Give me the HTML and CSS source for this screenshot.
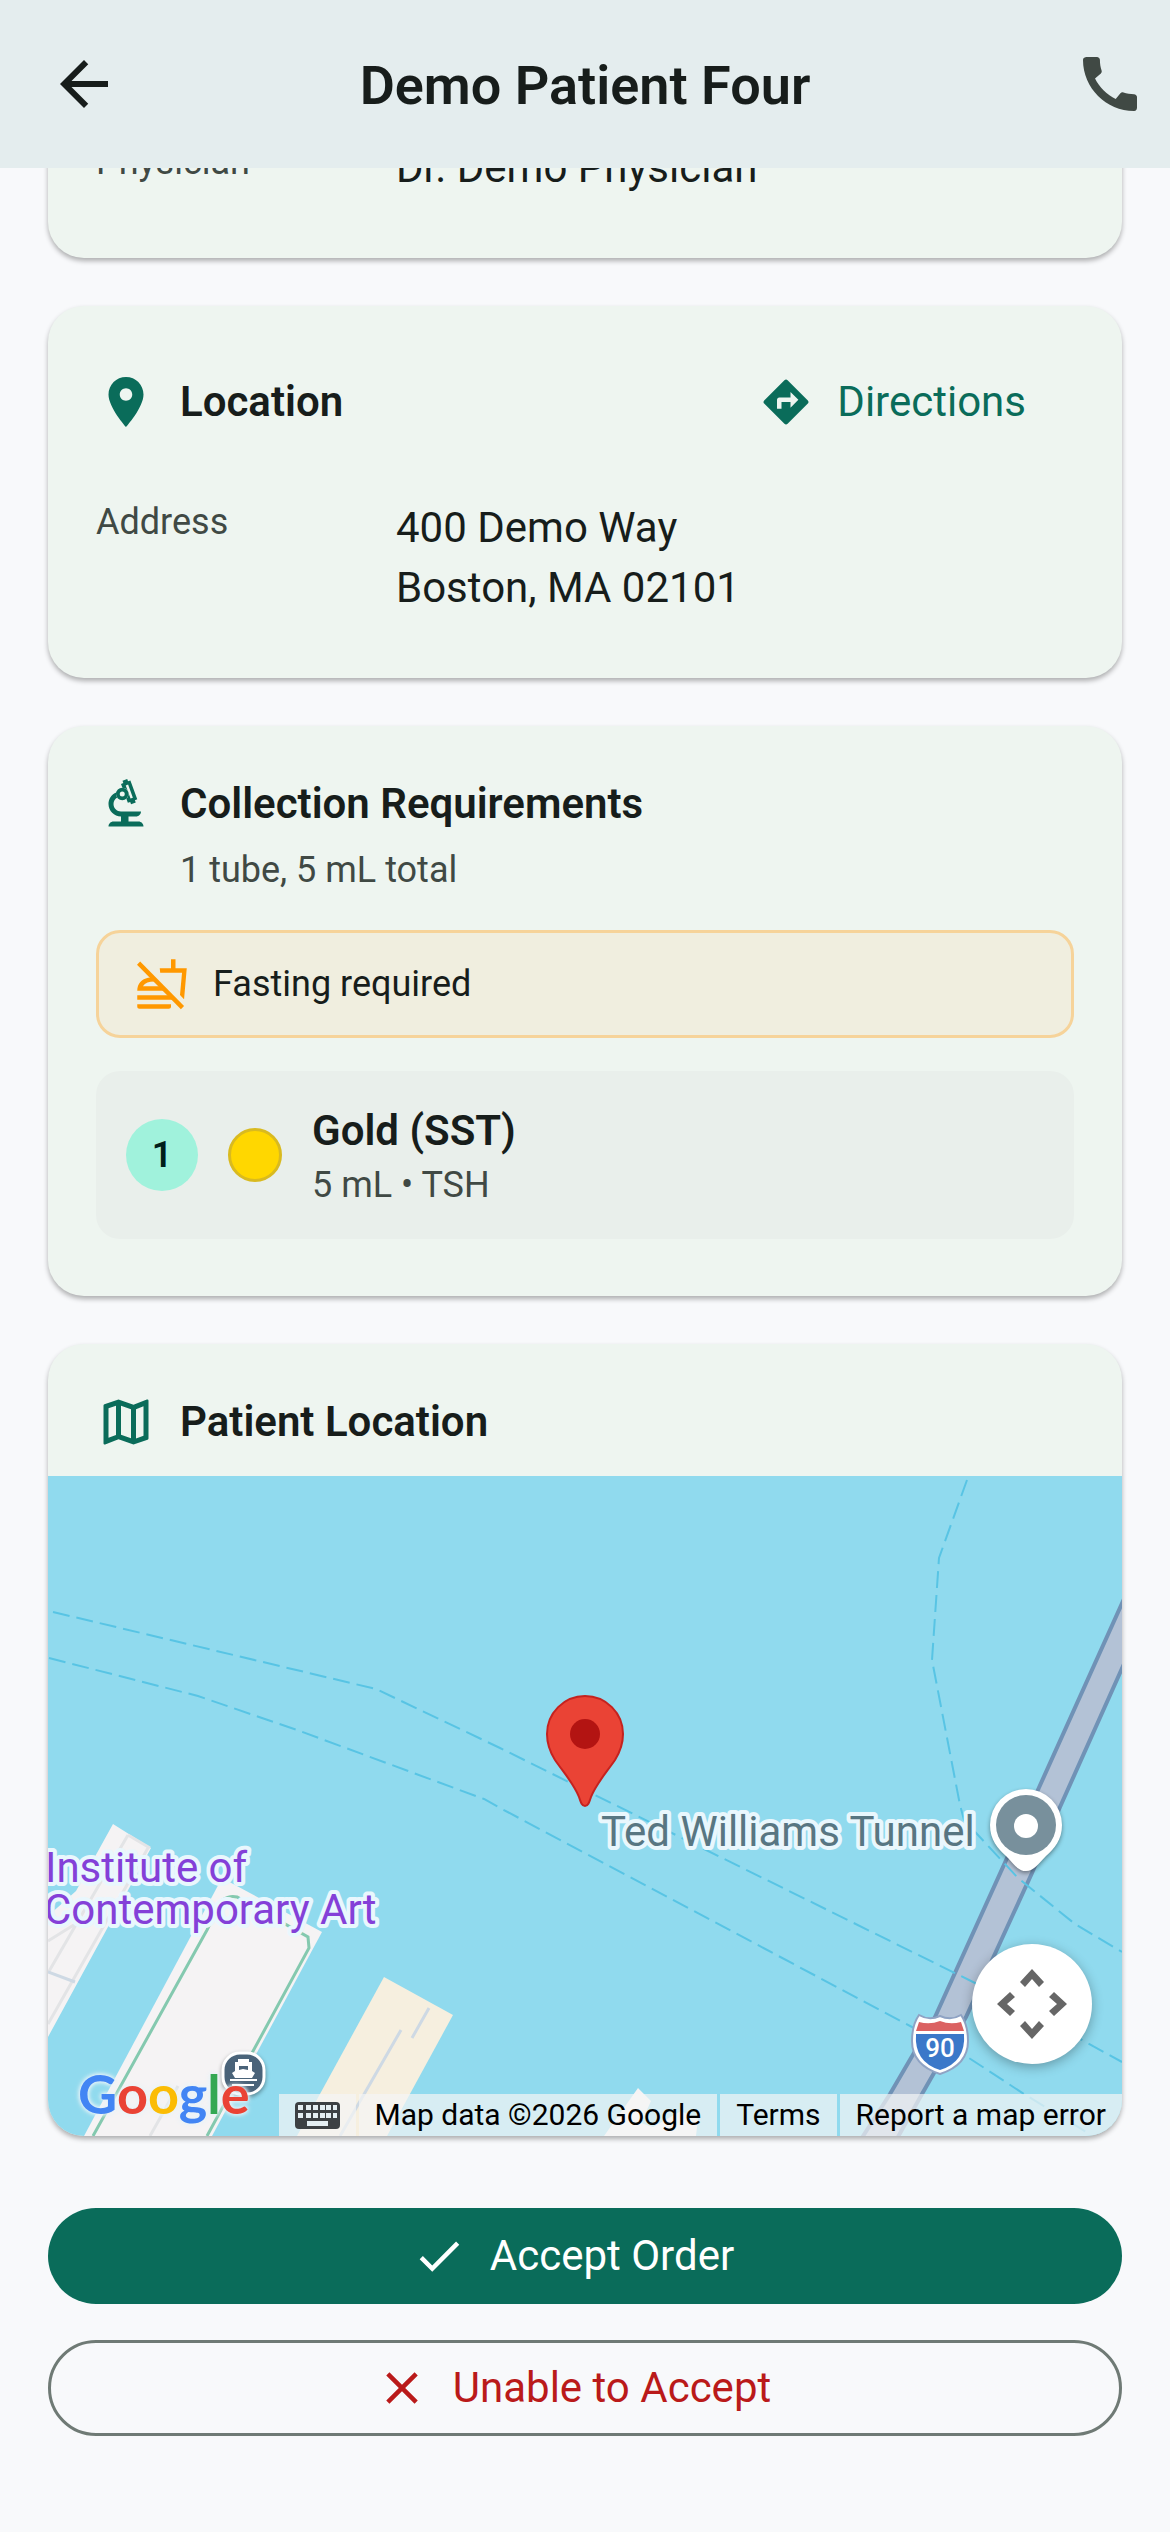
FILE: index.html
```
<!DOCTYPE html>
<html lang="en">
  <head>
    <meta charset="UTF-8" />
    <meta name="viewport" content="width=device-width, initial-scale=1.0" />
    <title>Demo Patient Four</title>
    <link rel="stylesheet" href="styles.css">
  </head>
  <body>
    <header class="app-bar">
      <button class="icon-button" aria-label="Back">
        <svg class="icon-lg" viewBox="0 0 24 24"><path d="M20 11H7.83l5.59-5.59L12 4l-8 8 8 8 1.41-1.41L7.83 13H20v-2z" /></svg>
      </button>
      <h1>Demo Patient Four</h1>
      <button class="icon-button call" aria-label="Call patient">
        <svg class="icon-lg" viewBox="0 0 24 24"><path d="M20.01 15.38c-1.23 0-2.42-.2-3.53-.56-.35-.12-.74-.03-1.01.24l-1.57 1.97c-2.83-1.35-5.48-3.9-6.89-6.83l1.95-1.66c.27-.28.35-.67.24-1.02-.37-1.11-.56-2.3-.56-3.53 0-.54-.45-.99-.99-.99H4.19C3.65 3 3 3.24 3 3.99 3 13.28 10.73 21 20.01 21c.71 0 .99-.63.99-1.18v-3.45c0-.54-.45-.99-.99-.99z" /></svg>
      </button>
    </header>

    <main class="content">
      <section class="card card-scrolled">
        <dl class="info-row">
          <dt>Physician</dt>
          <dd>Dr. Demo Physician</dd>
        </dl>
      </section>

      <section class="card">
        <div class="card-header tall">
          <svg class="icon" viewBox="0 0 24 24"><path d="M12 2C8.13 2 5 5.13 5 9c0 5.25 7 13 7 13s7-7.75 7-13c0-3.87-3.13-7-7-7zm0 9.5c-1.38 0-2.5-1.12-2.5-2.5s1.12-2.5 2.5-2.5 2.5 1.12 2.5 2.5-1.12 2.5-2.5 2.5z" /></svg>
          <h2>Location</h2>
          <button class="text-button">
            <svg class="icon-sm" viewBox="0 0 24 24"><path d="M21.71 11.29l-9-9c-.39-.39-1.02-.39-1.41 0l-9 9c-.39.39-.39 1.02 0 1.41l9 9c.39.39 1.02.39 1.41 0l9-9c.39-.38.39-1.01 0-1.41zM14 14.5V12h-4v3H8v-4c0-.55.45-1 1-1h5V7.5l3.5 3.5-3.5 3.5z" /></svg>
            Directions
          </button>
        </div>
        <dl class="info-row">
          <dt>Address</dt>
          <dd>400 Demo Way<br />Boston, MA 02101</dd>
        </dl>
      </section>

      <section class="card">
        <div class="card-header">
          <svg class="icon" viewBox="0 0 24 24">
            <path d="M7 19c-1.1 0-2 .9-2 2h14c0-1.1-.9-2-2-2h-4v-2h3c1.1 0 2-.9 2-2h-8c-1.66 0-3-1.34-3-3 0-1.09.59-2.04 1.46-2.56C8.17 9.03 8 8.54 8 8c0-.21.04-.42.09-.62C6.28 8.13 5 9.92 5 12c0 2.76 2.24 5 5 5v2H7z" />
            <path fill-rule="evenodd" d="M10.56 5.51C11.91 5.54 13 6.64 13 8c0 .75-.33 1.41-.85 1.87l.59 1.62.94-.34.34.94 1.88-.68-.34-.94.94-.34L13.76 2.6l-.94.34L12.48 2 10.6 2.68l.34.94-.94.35.56 1.54zM11.9 4.55l.94-.34 1.91 5.24-.94.34z" />
            <path fill-rule="evenodd" d="M10.5 5.5a2.5 2.5 0 1 0 0 5 2.5 2.5 0 0 0 0-5zm0 1.5a1 1 0 1 1 0 2 1 1 0 0 1 0-2z" />
          </svg>
          <div class="card-title">
            <h2>Collection Requirements</h2>
            <p>1 tube, 5 mL total</p>
          </div>
        </div>
        <div class="notice">
          <svg class="icon-sm" viewBox="0 0 24 24">
            <path d="M.9 3.4L2.3 2l19.5 19.8-1.4 1.4z" />
            <path d="M16 1h2v4h5l-1.2 13.8-1.8-1.9L20.9 7h-9.700L11 5h5zM1 17h14.500l2 2H1zM1 21h15v1c0 .6-.4 1-1 1H2c-.6 0-1-.4-1-1z" />
            <path fill-rule="evenodd" d="M1 15c0-3.300 2.100-5.200 4.800-5.800L8 9l6 6zM3.500 13h7.200L8.500 10.900C6.300 10.900 4.500 11.500 3.500 13z" />
          </svg>
          Fasting required
        </div>
        <div class="tube">
          <span class="tube-count">1</span>
          <span class="tube-color"></span>
          <div>
            <h3>Gold (SST)</h3>
            <p>5 mL • TSH</p>
          </div>
        </div>
      </section>

      <section class="card map-card">
        <div class="card-header">
          <svg class="icon" viewBox="0 0 24 24"><path d="M20.5 3l-.16.03L15 5.1 9 3 3.36 4.9c-.21.07-.36.25-.36.48V20.5c0 .28.22.5.5.5l.16-.03L9 18.9l6 2.1 5.64-1.9c.21-.07.36-.25.36-.48V3.5c0-.28-.22-.5-.5-.5zM10 5.47l4 1.4v11.66l-4-1.4V5.47zm-5 .99l3-1.01v11.7l-3 1.16V6.46zm14 11.08l-3 1.01V6.86l3-1.16v11.84z" /></svg>
          <h2>Patient Location</h2>
        </div>
        <div class="map">
          <svg class="map-tiles" viewBox="0 0 1074 660" preserveAspectRatio="xMidYMid slice">
            <!-- piers -->
            <path class="land" d="M65 348l38 24L0 561V440l28-25z" />
            <path class="lane" d="M80 359L0 497M100 372L0 548M80 359l22 13M0 465l45-28" />
            <path class="street" d="M0 496l27 10" />
            <path class="land" d="M174 402l100 54-110 204H36z" />
            <path class="lane" d="M130 610l-28 50" />
            <path class="trail" d="M45 660l114-206 15-30q8-5 15-3l71 40 1 11-102 188" />
            <path class="sand" d="M336 501l69 38-66 121h-90z" />
            <path class="street" d="M381 532l-17 30M353 554l-61 106" />
            <path class="land" d="M590 612l13 13-10 22 12 4 28-16 17 8-2 17h-92z" />
            <!-- motorway -->
            <path class="road" d="M1080 114l-91 202-102 225-45 77-32 50h36l28-50 44-77 66-144 28-66 68-152z" />
            <!-- ferry routes -->
            <path class="ferry" d="M5 136l323 77 124 59 475 235 107 57 40 22" />
            <path class="ferry" d="M1 182l149 38 99 34 187 69 18 10 410 218 57 31 55 36 64 39" />
            <path class="ferry" d="M919 4l-28 78-7 102 28 145 4 15 54 58 57 46 47 28" />

            <text class="place museum" x="-3" y="406">Institute of</text>
            <text class="place museum" x="-4" y="448">Contemporary Art</text>
            <text class="place tunnel" x="553" y="370">Ted Williams Tunnel</text>

            <g class="poi">
              <path fill="#fff" d="M978 313a36 36 0 0 0-36 36c0 15 8 24 16 31 8 8 12 15 20 15s12-7 20-15c8-7 16-16 16-31a36 36 0 0 0-36-36z" />
              <circle cx="978" cy="349" r="30" fill="#78909c" />
              <circle cx="978" cy="350" r="12" fill="#fff" />
            </g>

            <g>
              <path fill="#fff" stroke="#8fa3c4" stroke-width="2" d="M871 539q10 6 21 1 11 5 21-1 7 10 7 26 0 24-28 33-28-9-28-33 0-16 7-26z" />
              <path fill="#db6262" d="M871 546q11 3 21-1 10 4 21 1l3 9h-48z" />
              <path fill="#3b78c9" d="M868 558h48q2 28-24 36-26-8-24-36z" />
              <text class="shield" x="892" y="581">90</text>
            </g>

            <g class="poi">
              <rect x="175" y="577" width="41" height="41" rx="17" fill="#4a6379" stroke="#fff" stroke-width="3" />
              <path fill="#fff" fill-rule="evenodd" d="M190 583h11v3h3v9l3 2-3 5h-17l-3-5 3-2v-9h3zM191 590v4l4-1 5 1v-4zM182 603h27v2h-27zM184 608h22v2h-22z" />
            </g>

            <path class="pin" d="M537 220a38 38 0 0 0-38 38c0 11 3 18 8 26 9 13 19 24 24 37 2 6 3 9 6 9s4-3 6-9c5-13 15-24 24-37 5-8 8-15 8-26a38 38 0 0 0-38-38z" />
            <circle cx="537" cy="258" r="15" fill="#b31412" />
          </svg>

          <a class="google" href="#"><span class="blue">G</span><span class="red">o</span><span class="yellow">o</span><span class="blue">g</span><span class="green">l</span><span class="red">e</span></a>

          <button class="camera" aria-label="Map camera controls">
            <svg viewBox="-60 -60 120 120"><path d="M0-35l12 13-5 5-7-8-7 8-5-5zM0 35l12-13-5-5-7 8-7-8-5 5zM-35 0l13-12 5 5-8 7 8 7-5 5zM35 0L22-12l-5 5 8 7-8 7 5 5z" /></svg>
          </button>

          <div class="map-footer">
            <button class="keyboard" aria-label="Keyboard shortcuts">
              <svg viewBox="0 0 45 27"><rect width="45" height="27" rx="4" fill="#3c4043" /><path fill="#e4eef2" d="M3 3h5v5H3zM11 3h5v5h-5zM18 3h5v5h-5zM25 3h5v5h-5zM31 3h5v5h-5zM38 3h4v5h-4zM3 11h5v5H3zM11 11h5v5h-5zM18 11h5v5h-5zM25 11h5v5h-5zM31 11h5v5h-5zM38 11h4v5h-4zM12 19h21v5H12z" /></svg>
            </button>
            <span>Map data ©2026 Google</span>
            <a href="#">Terms</a>
            <a href="#">Report a map error</a>
          </div>
        </div>
      </section>

      <div class="actions">
        <button class="btn btn-accept">
          <svg class="icon-sm" viewBox="0 0 24 24"><path d="M9 16.17L4.83 12l-1.42 1.41L9 19 21 7l-1.41-1.41z" /></svg>
          Accept Order
        </button>
        <button class="btn btn-decline">
          <svg class="icon-sm" viewBox="0 0 24 24"><path d="M19 6.41L17.59 5 12 10.59 6.41 5 5 6.41 10.59 12 5 17.59 6.41 19 12 13.41 17.59 19 19 17.59 13.41 12z" /></svg>
          Unable to Accept
        </button>
      </div>
    </main>
  </body>
</html>
```

FILE: styles.css
```
* {
  box-sizing: border-box;
}

body {
  margin: 0;
  min-height: 100vh;
  background-color: #f8f9fb;
  color: #171d1b;
  font-family: Roboto, sans-serif;
  font-size: 42px;
  line-height: 60px;
}

h1,
h2,
h3,
p,
dl,
dd {
  margin: 0;
}

button {
  border: none;
  background: none;
  padding: 0;
  color: inherit;
  font: inherit;
  cursor: pointer;
}

a {
  color: inherit;
  text-decoration: none;
}

svg {
  display: block;
  flex-shrink: 0;
  fill: currentColor;
}

.icon {
  width: 60px;
  height: 60px;
  color: #0a6c5a;
}

.icon-sm {
  width: 54px;
  height: 54px;
}

.icon-lg {
  width: 72px;
  height: 72px;
}

/* App bar */
.app-bar {
  position: sticky;
  top: 0;
  z-index: 1;
  display: grid;
  grid-template-columns: 96px 1fr 96px;
  align-items: center;
  height: 168px;
  padding: 0 24px;
  background-color: #e4edee;
}

.app-bar h1 {
  padding-top: 3px;
  font-size: 54px;
  font-weight: 600;
  text-align: center;
  line-height: 72px;
}

.icon-button {
  justify-self: end;
}

.call {
  color: #404944;
}

/* Cards */
.content {
  display: flex;
  flex-direction: column;
  gap: 48px;
  padding: 0 48px 96px;
}

.card {
  padding: 48px;
  border-radius: 36px;
  background-color: #eef5f0;
  box-shadow: 0 3px 5px rgba(0, 0, 0, 0.3);
}

/* first card is partly scrolled under the app bar */
.card-scrolled {
  margin-top: -90px;
}

.card-header {
  display: flex;
  align-items: flex-start;
  gap: 24px;
  margin-bottom: 36px;
}

.tall {
  align-items: center;
  min-height: 96px;
}

h2,
h3 {
  font-size: 42px;
  font-weight: 600;
}

.card-title p {
  margin-top: 12px;
}

.card p {
  color: #404944;
  font-size: 36px;
  line-height: 48px;
}

.text-button {
  display: flex;
  align-items: center;
  gap: 24px;
  margin-left: auto;
  padding: 0 48px;
  color: #0a6c5a;
}

.info-row {
  display: grid;
  grid-template-columns: 300px 1fr;
  padding: 12px 0;
}

.info-row dt {
  color: #404944;
  font-size: 36px;
  line-height: 48px;
}

/* Collection requirements */
.notice {
  display: flex;
  align-items: center;
  gap: 24px;
  height: 108px;
  padding: 0 36px;
  border: 3px solid #f6d39a;
  border-radius: 24px;
  background-color: #f0eedf;
  font-size: 36px;
}

.notice svg {
  color: #ff9800;
}

.tube {
  display: flex;
  align-items: center;
  gap: 30px;
  margin: 33px 0 9px;
  padding: 30px;
  border-radius: 24px;
  background-color: #e9efeb;
}

.tube-count {
  width: 72px;
  height: 72px;
  border-radius: 50%;
  background-color: #a0f2dc;
  color: #00201a;
  font-size: 36px;
  font-weight: 600;
  line-height: 72px;
  text-align: center;
}

.tube-color {
  width: 54px;
  height: 54px;
  border: 3px solid #d9ba1f;
  border-radius: 50%;
  background-color: #ffd700;
}

/* Map */
.map-card {
  padding: 0;
  overflow: hidden;
}

.map-card .card-header {
  margin: 0;
  padding: 48px 48px 24px;
}

.map {
  position: relative;
  height: 660px;
  background-color: #90daee;
}

.map-tiles {
  width: 100%;
  height: 100%;
}

.land {
  fill: #f5f3f4;
}

.sand {
  fill: #f6efdf;
}

.lane,
.street,
.trail,
.ferry {
  fill: none;
  stroke: #e3e4e6;
  stroke-width: 3;
}

.street {
  stroke: #ced9e4;
}

.trail {
  stroke: #84c9af;
}

.ferry {
  stroke: #58c4e4;
  stroke-width: 2;
  stroke-dasharray: 17 7;
}

.road {
  fill: #b3c2d6;
  stroke: #7092b6;
  stroke-width: 4;
}

.place {
  font-size: 42px;
  paint-order: stroke;
  stroke: #e9f7fd;
  stroke-width: 8;
  stroke-linejoin: round;
}

.museum {
  fill: #8440d8;
}

.tunnel {
  fill: #587682;
}

.poi {
  filter: drop-shadow(0 2px 2px rgba(0, 0, 0, 0.4));
}

.shield {
  fill: #fff;
  font-size: 26px;
  font-weight: 500;
  text-anchor: middle;
}

.pin {
  fill: #ea4335;
  stroke: #c5221f;
  stroke-width: 2;
}

.google {
  position: absolute;
  left: 30px;
  bottom: 12px;
  font-family: Lato, sans-serif;
  font-size: 54px;
  font-weight: 700;
  filter: drop-shadow(0 0 2px #e8f3f8) drop-shadow(0 0 2px #e8f3f8);
}

.blue {
  color: #4285f4;
}

.red {
  color: #ea4335;
}

.yellow {
  color: #fbbc04;
}

.green {
  color: #34a853;
}

.camera {
  position: absolute;
  right: 30px;
  bottom: 72px;
  width: 120px;
  height: 120px;
  border-radius: 50%;
  background-color: #fff;
  color: #666;
  box-shadow: 0 3px 12px rgba(0, 0, 0, 0.3);
}

.map-footer {
  position: absolute;
  right: 0;
  bottom: 0;
  display: flex;
  gap: 3px;
  color: #000;
  font-size: 30px;
  line-height: 42px;
}

.map-footer > * {
  padding: 0 16px;
  background-color: rgba(245, 245, 245, 0.7);
}

.keyboard svg {
  width: 45px;
}

/* Actions */
.actions {
  display: flex;
  flex-direction: column;
  gap: 36px;
  margin-top: 24px;
}

.btn {
  display: flex;
  align-items: center;
  justify-content: center;
  gap: 24px;
  height: 96px;
  padding: 0 72px 0 48px;
  border-radius: 48px;
}

.btn-accept {
  background-color: #0a6c5a;
  color: #fff;
}

.btn-decline {
  border: 3px solid #6f7a75;
  color: #ba1a1a;
}
```
